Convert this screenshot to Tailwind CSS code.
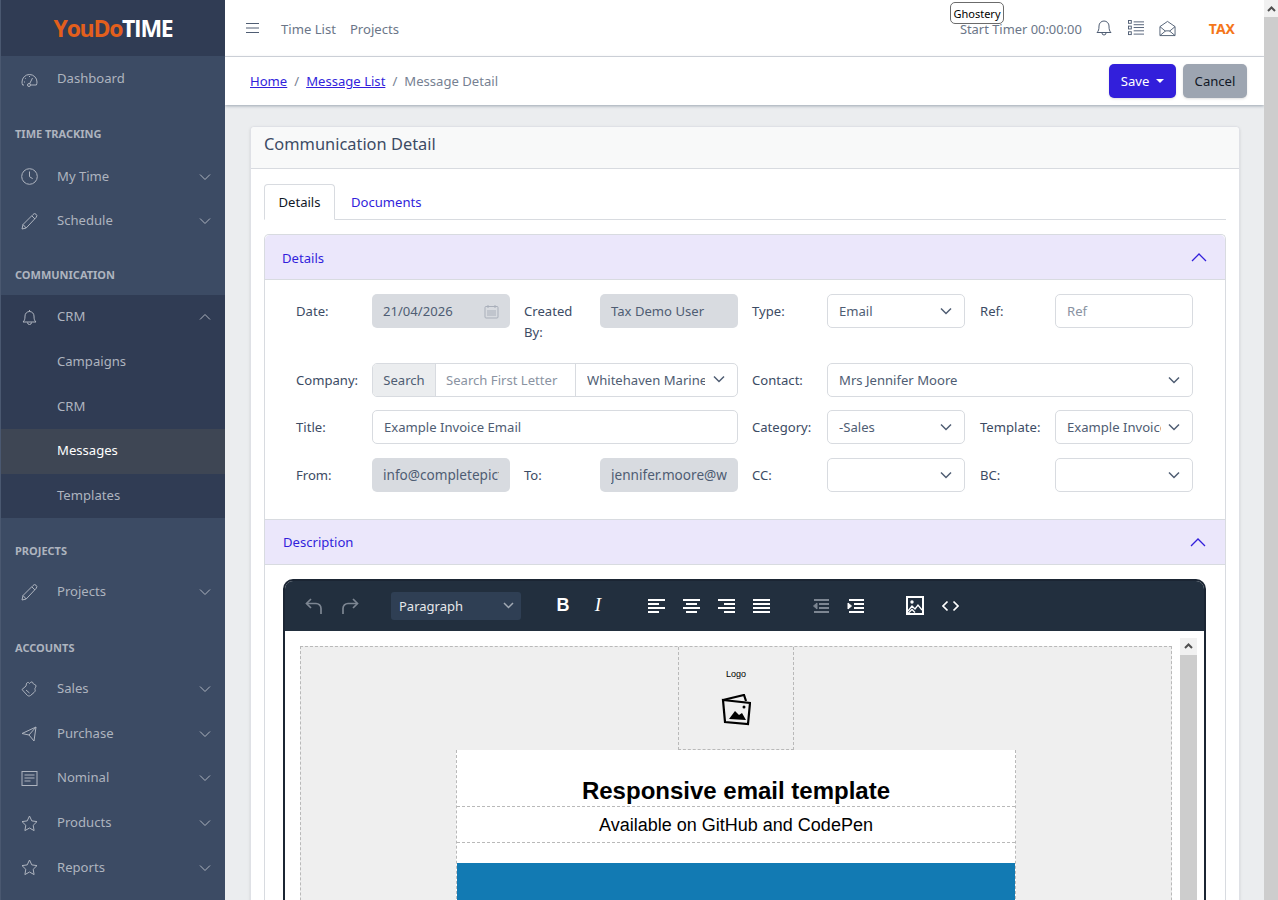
<!DOCTYPE html>
<html lang="en">
<head>
  <meta charset="UTF-8" />
  <title>Message Detail</title>
  <script src="https://cdn.jsdelivr.net/npm/@tailwindcss/browser@4"></script>
</head>
<body class="h-[900px] w-[1278px] overflow-hidden flex bg-[#ebedef] font-['Noto_Sans',sans-serif] text-[13.1px] text-[#3c4b64]">

  <!-- sidebar -->
  <aside class="w-[225px] shrink-0 h-[900px] bg-[#3c4b64] border-l border-l-[#4a5870] text-[#aeb4bf] overflow-hidden">
    <div class="h-[56px] bg-[#303c54] flex items-center justify-center text-[23px] font-bold tracking-[-1.3px] font-['Open_Sans',sans-serif]">
      <span class="text-[#e35f1c]">YouDo</span><span class="text-white">TIME</span>
    </div>
    <a class="h-[46px] flex items-center pl-[20px]">
      <svg class="w-[17px] h-[17px] mr-[19px]" viewBox="0 0 17 17" fill="none" stroke="currentColor"><path d="M3 14H1.600A7.600 7.600 0 0 1 1 11a7.500 7.500 0 0 1 15 0c0 1-.2 2-.6 3H10"/><path d="M8.500 13l3-6"/><circle cx="8" cy="14" r="1.500"/><path d="M8.500 5v1M4 7l.7.7M3 11h1" /></svg>
      Dashboard
    </a>
    <div class="h-[52.5px] pt-[21.5px] pl-[14px] text-[11px] leading-[20px] font-bold">TIME TRACKING</div>
    <a class="h-[44.5px] flex items-center pl-[20px]">
      <svg class="w-[17px] h-[17px] mr-[19px]" viewBox="0 0 17 17" fill="none" stroke="currentColor"><circle cx="8.500" cy="8.500" r="7.800"/><path d="M8.500 3.500v5.200l3.200 2"/></svg>
      My Time
      <svg class="w-[12px] h-[12px] ml-auto mr-[14px]" viewBox="0 0 12 12" fill="none" stroke="currentColor"><path d="M1 3.500l5 5 5-5"/></svg>
    </a>
    <a class="h-[44.5px] flex items-center pl-[20px]">
      <svg class="w-[17px] h-[17px] mr-[19px]" viewBox="0 0 17 17" fill="none" stroke="currentColor"><path d="M1 16l1-4.500L12 1.500a1.900 1.900 0 0 1 3.300 2.700L5.200 15z"/><path d="M2 11.500L5.200 15M11 3l3 3"/></svg>
      Schedule
      <svg class="w-[12px] h-[12px] ml-auto mr-[14px]" viewBox="0 0 12 12" fill="none" stroke="currentColor"><path d="M1 3.500l5 5 5-5"/></svg>
    </a>
    <div class="h-[51px] pt-[21.5px] pl-[14px] text-[11px] leading-[20px] font-bold">COMMUNICATION</div>
    <div class="bg-[#303c54]">
      <a class="h-[45px] flex items-center pl-[20px]">
        <svg class="w-[17px] h-[17px] mr-[19px]" viewBox="0 0 17 17" fill="none" stroke="currentColor"><path d="M2 13h13c-1.500-1.500-2-2.500-2-6a4.500 4.500 0 0 0-9 0c0 3.500-.5 4.500-2 6z"/><path d="M6.500 13.500a2 2 0 0 0 4 0M8.500 1v1.500"/></svg>
        CRM
        <svg class="w-[12px] h-[12px] ml-auto mr-[14px]" viewBox="0 0 12 12" fill="none" stroke="currentColor"><path d="M1 8.500l5-5 5 5"/></svg>
      </a>
      <a class="h-[45px] flex items-center pl-[56px]">Campaigns</a>
      <a class="h-[44.5px] flex items-center pl-[56px]">CRM</a>
      <a class="h-[44.5px] flex items-center pl-[56px] bg-[#3e4654] text-white">Messages</a>
      <a class="h-[44px] flex items-center pl-[56px]">Templates</a>
    </div>
    <div class="h-[52.5px] pt-[23px] pl-[14px] text-[11px] leading-[20px] font-bold">PROJECTS</div>
    <a class="h-[44.5px] flex items-center pl-[20px]">
      <svg class="w-[17px] h-[17px] mr-[19px]" viewBox="0 0 17 17" fill="none" stroke="currentColor"><path d="M1 16l1-4.500L12 1.500a1.900 1.900 0 0 1 3.300 2.700L5.200 15z"/><path d="M2 11.500L5.200 15M11 3l3 3"/></svg>
      Projects
      <svg class="w-[12px] h-[12px] ml-auto mr-[14px]" viewBox="0 0 12 12" fill="none" stroke="currentColor"><path d="M1 3.500l5 5 5-5"/></svg>
    </a>
    <div class="h-[52.5px] pt-[23px] pl-[14px] text-[11px] leading-[20px] font-bold">ACCOUNTS</div>
    <a class="h-[44.5px] flex items-center pl-[20px]">
      <svg class="w-[17px] h-[17px] mr-[19px]" viewBox="0 0 17 17" fill="none" stroke="currentColor"><path d="M1 8.500l4-3.500c.5-1 0-3 1.500-3.500s1.500 1 2 1 1-2 2.500-1.500.8 1.500 1.500 2 2.500.5 2.500 2-1.500 2-1 3.500c.5 1 .2 2-1 3l-3.500 3c-1 .7-2 .7-3 0z"/><path d="M5 9l3.500 3"/></svg>
      Sales
      <svg class="w-[12px] h-[12px] ml-auto mr-[14px]" viewBox="0 0 12 12" fill="none" stroke="currentColor"><path d="M1 3.500l5 5 5-5"/></svg>
    </a>
    <a class="h-[44.5px] flex items-center pl-[20px]">
      <svg class="w-[17px] h-[17px] mr-[19px]" viewBox="0 0 17 17" fill="none" stroke="currentColor"><path d="M1 8.500L15 2l-2 14-5-6z"/><path d="M8 10L15 2"/></svg>
      Purchase
      <svg class="w-[12px] h-[12px] ml-auto mr-[14px]" viewBox="0 0 12 12" fill="none" stroke="currentColor"><path d="M1 3.500l5 5 5-5"/></svg>
    </a>
    <a class="h-[44.5px] flex items-center pl-[20px]">
      <svg class="w-[17px] h-[17px] mr-[19px]" viewBox="0 0 17 17" fill="none" stroke="currentColor"><rect x="1" y="1.500" width="15" height="14"/><path d="M3.500 5h10M3.500 8h10M3.500 11h6"/></svg>
      Nominal
      <svg class="w-[12px] h-[12px] ml-auto mr-[14px]" viewBox="0 0 12 12" fill="none" stroke="currentColor"><path d="M1 3.500l5 5 5-5"/></svg>
    </a>
    <a class="h-[45px] flex items-center pl-[20px]">
      <svg class="w-[17px] h-[17px] mr-[19px]" viewBox="0 0 17 17" fill="none" stroke="currentColor"><path d="M8.500 1l2.300 4.900 5.200.7-3.800 3.700.9 5.300-4.600-2.600-4.600 2.600.9-5.300L1 6.600l5.200-.7z"/></svg>
      Products
      <svg class="w-[12px] h-[12px] ml-auto mr-[14px]" viewBox="0 0 12 12" fill="none" stroke="currentColor"><path d="M1 3.500l5 5 5-5"/></svg>
    </a>
    <a class="h-[44.5px] flex items-center pl-[20px]">
      <svg class="w-[17px] h-[17px] mr-[19px]" viewBox="0 0 17 17" fill="none" stroke="currentColor"><path d="M8.500 1l2.300 4.900 5.200.7-3.800 3.700.9 5.300-4.600-2.600-4.600 2.600.9-5.300L1 6.600l5.200-.7z"/></svg>
      Reports
      <svg class="w-[12px] h-[12px] ml-auto mr-[14px]" viewBox="0 0 12 12" fill="none" stroke="currentColor"><path d="M1 3.500l5 5 5-5"/></svg>
    </a>
  </aside>

  <!-- main column -->
  <div class="w-[1039px] shrink-0 h-[900px] relative overflow-hidden">
    <header class="h-[57px] bg-white border-b border-[#d8dbe0] flex items-center pl-[21px] text-[#6b7688]">
      <svg class="w-[13px] h-[12px] mr-[22px]" viewBox="0 0 13 12" stroke="#4f5d73" fill="none"><path d="M0 1.500h13M0 6h13M0 10.500h13"/></svg>
      <span class="mr-[14px] pt-[4px]">Time List</span>
      <span class="pt-[4px]">Projects</span>
      <span class="ml-auto mr-[14px] pt-[4px] text-[12.9px]">Start Timer 00:00:00</span>
      <svg class="w-[16px] h-[18px] mr-[16px]" viewBox="0 0 16 18" fill="none" stroke="#4f5d73"><path d="M1 13.500h14c-1.500-1.500-2-3-2-6.500a5 5 0 0 0-10 0c0 3.500-.5 5-2 6.500z"/><path d="M6 14a2 2 0 0 0 4 0"/></svg>
      <svg class="w-[16px] h-[18px] mr-[15px]" viewBox="0 0 17 18" fill="none" stroke="#4f5d73"><path d="M6 2.500h11M6 5.500h11M6 8.500h11M6 12h11M6 15.500h11"/><rect x=".5" y="1" width="3" height="3"/><rect x=".5" y="7" width="3" height="3"/><rect x=".5" y="13" width="3" height="3"/></svg>
      <svg class="w-[17px] h-[17px] mr-[33px]" viewBox="0 0 18 17" fill="none" stroke="#4f5d73"><path d="M1 6.500L9 1l8 5.500V16H1z"/><path d="M1 6.500l6 5M17 6.500l-6 5M1 16l6-5h4l6 5"/></svg>
      <span class="text-[14px] text-[#f5761a] font-bold mr-[29px]">TAX</span>
    </header>
    <div class="absolute left-[725px] top-[2px] h-[22px] w-[54px] bg-white border border-[#6b6b6b] rounded-[5px] text-[11px] leading-[21px] text-center text-black">Ghostery</div>

    <div class="h-[48px] bg-white shadow-[0_1px_3px_rgba(60,75,100,0.45)] flex items-center pl-[25px] pr-[17px] relative">
      <a class="text-[#321fdb] underline pt-[2px]">Home</a>
      <span class="mx-[7px] text-[#768192] pt-[2px]">/</span>
      <a class="text-[#321fdb] underline pt-[2px]">Message List</a>
      <span class="mx-[7px] text-[#768192] pt-[2px]">/</span>
      <span class="text-[#768192] pt-[2px]">Message Detail</span>
      <button class="ml-auto h-[34px] w-[67px] rounded-[5px] bg-[#321fdb] text-white flex items-center justify-center shadow-sm"><span class="pt-[2px]">Save</span><span class="ml-[7px] border-x-[4px] border-x-transparent border-t-[4px] border-t-white"></span></button>
      <button class="ml-[7px] h-[34px] w-[64px] pt-[2px] rounded-[5px] bg-[#9da5b1] text-[#111827] shadow-sm">Cancel</button>
    </div>

    <!-- card -->
    <div class="mt-[21px] ml-[25px] w-[990px] bg-white rounded-[4px] border border-[#dfe1e6] shadow-sm">
      <div class="h-[42px] pb-[6px] bg-[#f8f9f9] border-b border-[#d8dbe0] flex items-center pl-[13px] text-[16.4px] text-[#3c4b64] rounded-t-[4px]">Communication Detail</div>
      <div class="pt-[15px] px-[13px]">
        <div class="flex h-[36px] border-b border-[#d8dbe0]">
          <div class="h-[36px] w-[71px] pt-[2px] bg-white border border-[#d8dbe0] border-b-white rounded-t-[4px] text-[#111827] flex items-center justify-center">Details</div>
          <div class="h-[36px] px-[16px] pt-[2px] text-[#321fdb] flex items-center">Documents</div>
        </div>

        <div class="mt-[14px] border border-[#d8dbe0] rounded-t-[5px] border-b-0">
          <div class="h-[45px] bg-[#ebe7fb] border-b border-[#d8dbe0] text-[#321fdb] flex items-center justify-between pl-[17px] pr-[18px] rounded-t-[5px]">
            <span class="pt-[3px]">Details</span>
            <svg class="w-[16px] h-[10px]" viewBox="0 0 16 10" fill="none" stroke="#321fdb" stroke-width="1.300"><path d="M1 9l7-7 7 7"/></svg>
          </div>

          <div class="pl-[31px] pt-[14px] pb-[27px] grid grid-cols-[228px_228px_228px_228px] gap-y-[13.500px]">
            <!-- row 1 -->
            <div class="flex h-[55px]">
              <div class="w-[76px] leading-[34px]">Date:</div>
              <div class="w-[138px] h-[34px] pt-[2px] bg-[#d8dbe0] rounded-[5px] flex items-center px-[11px] text-[#4f5d73]">21/04/2026
                <svg class="ml-auto -mt-[2px] w-[15px] h-[15px]" viewBox="0 0 15 15" fill="none" stroke="#a9afba"><rect x="1" y="2.500" width="13" height="11.500" rx="1"/><path d="M4 1v3M11 1v3M3 7h9M3 9h9M3 11h9"/></svg>
              </div>
            </div>
            <div class="flex h-[55px]">
              <div class="w-[76px] pr-[20px] pt-[7px] leading-[21px]">Created By:</div>
              <div class="w-[138px] h-[34px] pt-[2px] bg-[#d8dbe0] rounded-[5px] flex items-center px-[11px] text-[#4f5d73]">Tax Demo User</div>
            </div>
            <div class="flex h-[55px]">
              <div class="w-[75px] leading-[34px]">Type:</div>
              <div class="w-[138px] h-[34px] pt-[2px] border border-[#d8dbe0] rounded-[5px] flex items-center pl-[11px] pr-[12px] text-[#4f5d73]">Email
                <svg class="ml-auto -mt-[2px] w-[12px] h-[8px]" viewBox="0 0 12 8" fill="none" stroke="#4f5d73" stroke-width="1.500"><path d="M1 1.500l5 5 5-5"/></svg>
              </div>
            </div>
            <div class="flex h-[55px]">
              <div class="w-[75px] leading-[34px]">Ref:</div>
              <div class="w-[138px] h-[34px] pt-[2px] border border-[#d8dbe0] rounded-[5px] flex items-center pl-[11px] text-[#8a93a2]">Ref</div>
            </div>

            <!-- row 2 -->
            <div class="col-span-2 flex h-[34px]">
              <div class="w-[76px] leading-[34px]">Company:</div>
              <div class="w-[366px] h-[34px] border border-[#d8dbe0] rounded-[5px] flex items-center overflow-hidden">
                <div class="w-[63px] h-full pt-[2px] bg-[#ebedef] border-r border-[#d8dbe0] flex items-center justify-center text-[#4f5d73]">Search</div>
                <div class="w-[140px] h-full pt-[2px] border-r border-[#d8dbe0] flex items-center pl-[10px] text-[#8a93a2]">Search First Letter</div>
                <div class="flex-1 flex items-center pl-[11px] pr-[12px] text-[#4f5d73] min-w-0">
                  <span class="w-[118px] pt-[2px] overflow-hidden whitespace-nowrap">Whitehaven Marine</span>
                  <svg class="ml-auto w-[12px] h-[8px]" viewBox="0 0 12 8" fill="none" stroke="#4f5d73" stroke-width="1.500"><path d="M1 1.500l5 5 5-5"/></svg>
                </div>
              </div>
            </div>
            <div class="col-span-2 flex h-[34px]">
              <div class="w-[75px] leading-[34px]">Contact:</div>
              <div class="w-[366px] h-[34px] pt-[2px] border border-[#d8dbe0] rounded-[5px] flex items-center pl-[11px] pr-[12px] text-[#4f5d73]">Mrs Jennifer Moore
                <svg class="ml-auto -mt-[2px] w-[12px] h-[8px]" viewBox="0 0 12 8" fill="none" stroke="#4f5d73" stroke-width="1.500"><path d="M1 1.500l5 5 5-5"/></svg>
              </div>
            </div>

            <!-- row 3 -->
            <div class="col-span-2 flex h-[34px]">
              <div class="w-[76px] leading-[34px]">Title:</div>
              <div class="w-[366px] h-[34px] pt-[2px] border border-[#d8dbe0] rounded-[5px] flex items-center pl-[11px] text-[#4f5d73]">Example Invoice Email</div>
            </div>
            <div class="flex h-[34px]">
              <div class="w-[75px] leading-[34px]">Category:</div>
              <div class="w-[138px] h-[34px] pt-[2px] border border-[#d8dbe0] rounded-[5px] flex items-center pl-[11px] pr-[12px] text-[#4f5d73]">-Sales
                <svg class="ml-auto -mt-[2px] w-[12px] h-[8px]" viewBox="0 0 12 8" fill="none" stroke="#4f5d73" stroke-width="1.500"><path d="M1 1.500l5 5 5-5"/></svg>
              </div>
            </div>
            <div class="flex h-[34px]">
              <div class="w-[75px] leading-[34px]">Template:</div>
              <div class="w-[138px] h-[34px] border border-[#d8dbe0] rounded-[5px] flex items-center pl-[11px] pr-[12px] text-[#4f5d73]">
                <span class="w-[94px] pt-[2px] overflow-hidden whitespace-nowrap">Example Invoice</span>
                <svg class="ml-auto w-[12px] h-[8px]" viewBox="0 0 12 8" fill="none" stroke="#4f5d73" stroke-width="1.500"><path d="M1 1.500l5 5 5-5"/></svg>
              </div>
            </div>

            <!-- row 4 -->
            <div class="flex h-[34px]">
              <div class="w-[76px] leading-[34px]">From:</div>
              <div class="w-[138px] h-[34px] pt-[2px] bg-[#d8dbe0] rounded-[5px] flex items-center px-[11px] text-[13.6px] text-[#4f5d73] overflow-hidden whitespace-nowrap"><span class="overflow-hidden">info@completepicture.co.uk</span></div>
            </div>
            <div class="flex h-[34px]">
              <div class="w-[76px] leading-[34px]">To:</div>
              <div class="w-[138px] h-[34px] pt-[2px] bg-[#d8dbe0] rounded-[5px] flex items-center px-[11px] text-[13.6px] text-[#4f5d73] overflow-hidden whitespace-nowrap"><span class="overflow-hidden">jennifer.moore@whitehaven.com</span></div>
            </div>
            <div class="flex h-[34px]">
              <div class="w-[75px] leading-[34px]">CC:</div>
              <div class="w-[138px] h-[34px] border border-[#d8dbe0] rounded-[5px] flex items-center pl-[11px] pr-[12px]">
                <svg class="ml-auto w-[12px] h-[8px]" viewBox="0 0 12 8" fill="none" stroke="#4f5d73" stroke-width="1.500"><path d="M1 1.500l5 5 5-5"/></svg>
              </div>
            </div>
            <div class="flex h-[34px]">
              <div class="w-[75px] leading-[34px]">BC:</div>
              <div class="w-[138px] h-[34px] border border-[#d8dbe0] rounded-[5px] flex items-center pl-[11px] pr-[12px]">
                <svg class="ml-auto w-[12px] h-[8px]" viewBox="0 0 12 8" fill="none" stroke="#4f5d73" stroke-width="1.500"><path d="M1 1.500l5 5 5-5"/></svg>
              </div>
            </div>
          </div>

          <div class="h-[46px] bg-[#ebe7fb] border-y border-[#d8dbe0] text-[#321fdb] flex items-center justify-between pl-[18px] pr-[19px]">
            <span class="pt-[2px]">Description</span>
            <svg class="w-[16px] h-[10px]" viewBox="0 0 16 10" fill="none" stroke="#321fdb" stroke-width="1.300"><path d="M1 9l7-7 7 7"/></svg>
          </div>

          <!-- editor -->
          <div class="mt-[14px] ml-[18px] w-[923px] h-[400px] border-2 border-[#1b2533] rounded-t-[10px] bg-white overflow-hidden">
            <div class="h-[50px] bg-[#222f3e] flex items-center text-white">
              <svg class="ml-[20px] w-[18px] h-[18px]" viewBox="0 0 18 18" fill="none" stroke="#7d8692" stroke-width="1.700"><path d="M6 2L1.500 6.500 6 11"/><path d="M2 6.500h9a5 5 0 0 1 5 5V17"/></svg>
              <svg class="ml-[18px] w-[18px] h-[18px]" viewBox="0 0 18 18" fill="none" stroke="#7d8692" stroke-width="1.700"><path d="M12 2l4.500 4.500L12 11"/><path d="M16 6.500H7a5 5 0 0 0-5 5V17"/></svg>
              <div class="ml-[32px] w-[130px] h-[28px] bg-[#2f3f54] rounded-[3px] flex items-center pl-[8px] pr-[7px] text-[13px] text-[#e6e8eb]"><span class="pt-[3px]">Paragraph</span>
                <svg class="ml-auto w-[11px] h-[7px]" viewBox="0 0 11 7" fill="none" stroke="#a2aab4" stroke-width="1.500"><path d="M1 1l4.500 4.500L10 1"/></svg>
              </div>
              <span class="ml-[35px] w-[14px] text-center text-[18px] font-bold font-['Liberation_Sans',sans-serif]">B</span>
              <span class="ml-[21px] w-[14px] text-center text-[19px] italic font-['Liberation_Serif',serif]">I</span>
              <svg class="ml-[43px] w-[17px] h-[15px]" viewBox="0 0 17 15" stroke="#fff" stroke-width="2" fill="none"><path d="M0 2h17M0 6h11M0 10h17M0 14h11"/></svg>
              <svg class="ml-[18px] w-[17px] h-[15px]" viewBox="0 0 17 15" stroke="#fff" stroke-width="2" fill="none"><path d="M0 2h17M3 6h11M0 10h17M3 14h11"/></svg>
              <svg class="ml-[18px] w-[17px] h-[15px]" viewBox="0 0 17 15" stroke="#fff" stroke-width="2" fill="none"><path d="M0 2h17M6 6h11M0 10h17M6 14h11"/></svg>
              <svg class="ml-[18px] w-[17px] h-[15px]" viewBox="0 0 17 15" stroke="#fff" stroke-width="2" fill="none"><path d="M0 2h17M0 6h17M0 10h17M0 14h17"/></svg>
              <svg class="ml-[42px] w-[17px] h-[15px]" viewBox="0 0 17 15" stroke="#7d8692" stroke-width="2" fill="none"><path d="M2 2h15M7 6h10M7 10h10M2 14h15"/><path d="M5 5L1.500 8 5 11z" fill="#7d8692" stroke-width="1"/></svg>
              <svg class="ml-[18px] w-[17px] h-[15px]" viewBox="0 0 17 15" stroke="#fff" stroke-width="2" fill="none"><path d="M2 2h15M7 6h10M7 10h10M2 14h15"/><path d="M1 5l3.500 3L1 11z" fill="#fff" stroke-width="1"/></svg>
              <svg class="ml-[42px] w-[18px] h-[19px]" viewBox="0 0 18 19" stroke="#fff" fill="none"><rect x="1" y="1" width="16" height="17" stroke-width="2"/><circle cx="6" cy="6" r="1.700" fill="#fff" stroke="none"/><path d="M2 15l4-5 3 3 3-4 4 5M2 17.500l4-4 3 3" stroke-width="1.300"/></svg>
              <svg class="ml-[18px] w-[17px] h-[12px]" viewBox="0 0 17 12" stroke="#fff" stroke-width="1.700" fill="none"><path d="M5.500 1.500L1 6l4.500 4.500M11.500 1.500L16 6l-4.500 4.500"/></svg>
            </div>

            <div class="relative h-[350px] bg-white">
              <!-- email preview -->
              <div class="absolute left-[15px] top-[15px] w-[872px] h-[340px] bg-[#efefef] border border-dashed border-[#b9b9b9] font-['Liberation_Sans',sans-serif] text-black">
                <div class="w-[116px] h-[103px] mx-auto border-x border-b border-dashed border-[#b9b9b9] flex flex-col items-center">
                  <div class="mt-[21px] text-[9px] leading-[12px]">Logo</div>
                  <svg class="mt-[14px] w-[30px] h-[32px]" viewBox="0 0 30 32" fill="none" stroke="#000" stroke-width="2.200"><path d="M2 6L23 1l2 6"/><path d="M2 6l27 3-2 21-23-2z"/><path d="M8 25l6-8 4 4 3-2 4 7z" fill="#000" stroke="none"/><circle cx="23" cy="13" r="1.500" fill="#000" stroke="none"/></svg>
                </div>
                <div class="w-[560px] mx-auto bg-white border-x border-dashed border-[#b9b9b9] h-[300px]">
                  <div class="h-[57px] pt-[24px] text-center text-[24px] leading-[33px] font-bold border-b border-dashed border-[#b9b9b9]">Responsive email template</div>
                  <div class="h-[36px] text-center text-[18px] leading-[36px] border-b border-dashed border-[#b9b9b9]">Available on GitHub and CodePen</div>
                  <div class="mt-[20px] h-[120px] bg-[#127ab3]"></div>
                </div>
              </div>
              <!-- preview scrollbar -->
              <div class="absolute left-[895px] top-[7px] w-[17px] h-[343px] bg-[#f1f1f1]">
                <div class="h-[17px] flex items-center justify-center">
                  <svg class="w-[9px] h-[6px]" viewBox="0 0 9 6" fill="none" stroke="#505050" stroke-width="2"><path d="M1 5l3.500-3.500L8 5"/></svg>
                </div>
                <div class="h-[326px] bg-[#cdcdcd]"></div>
              </div>
            </div>
          </div>
        </div>
      </div>
    </div>
  </div>

  <!-- window scrollbar -->
  <div class="w-[14px] h-[900px] shrink-0 bg-[#f1f1f1]">
    <div class="h-[17px] flex items-center justify-center">
      <svg class="w-[9px] h-[6px]" viewBox="0 0 9 6" fill="none" stroke="#505050" stroke-width="2"><path d="M1 5l3.500-3.500L8 5"/></svg>
    </div>
    <div class="h-[883px] bg-[#cdcdcd]"></div>
  </div>
</body>
</html>
